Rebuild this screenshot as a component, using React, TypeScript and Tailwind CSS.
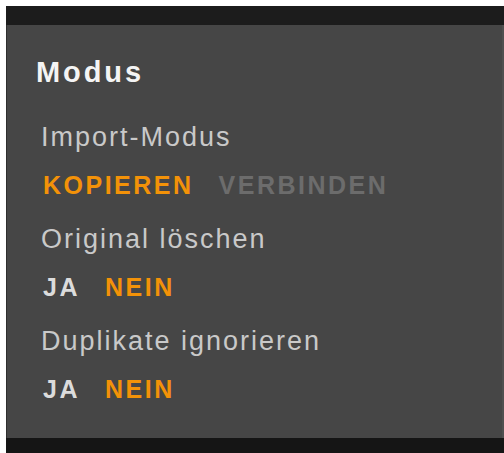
const font = { fontFamily: '"Liberation Sans", Arial, sans-serif' };

function Option({ label, tone }: { label: string; tone: "on" | "off" | "muted" }) {
  const color = tone === "on" ? "text-[#f39208]" : tone === "off" ? "text-[#dcdcdc]" : "text-[#6c6c6c]";
  return <span className={"text-[25px] leading-[25px] font-bold tracking-[2.5px] " + color}>{label}</span>;
}

function Setting({
  label,
  options,
  value,
  muted,
}: {
  label: string;
  options: string[];
  value: string;
  muted?: boolean;
}) {
  return (
    <div className="flex flex-col">
      <div className="ml-[34px] text-[27px] leading-[27px] tracking-[2px] text-[#c9c9c9]">{label}</div>
      <div className="ml-[36px] mt-[22px] flex gap-[25px]">
        {options.map((o) => (
          <Option key={o} label={o} tone={o === value ? "on" : muted ? "muted" : "off"} />
        ))}
      </div>
    </div>
  );
}

export default function App() {
  return (
    <div className="h-[453px] w-[504px] overflow-hidden bg-white pl-[6px] pt-[6px]" style={font}>
      <div className="flex h-full flex-col bg-[#1b1b1b]">
        <div className="h-[19px] bg-[#1c1c1c]" />
        <div className="flex flex-1 flex-col gap-[28px] border-l border-[#2e2e2e] border-r-2 border-r-[#4f4f4f] bg-[#464646] pt-[33px]">
          <div className="mb-[9px] ml-[29px] text-[29px] leading-[29px] font-bold tracking-[2.9px] text-[#f4f4f4]">
            Modus
          </div>
          <Setting label="Import-Modus" options={["KOPIEREN", "VERBINDEN"]} value="KOPIEREN" muted />
          <Setting label="Original löschen" options={["JA", "NEIN"]} value="NEIN" />
          <Setting label="Duplikate ignorieren" options={["JA", "NEIN"]} value="NEIN" />
        </div>
        <div className="h-[15px] bg-[#151515]" />
      </div>
    </div>
  );
}
